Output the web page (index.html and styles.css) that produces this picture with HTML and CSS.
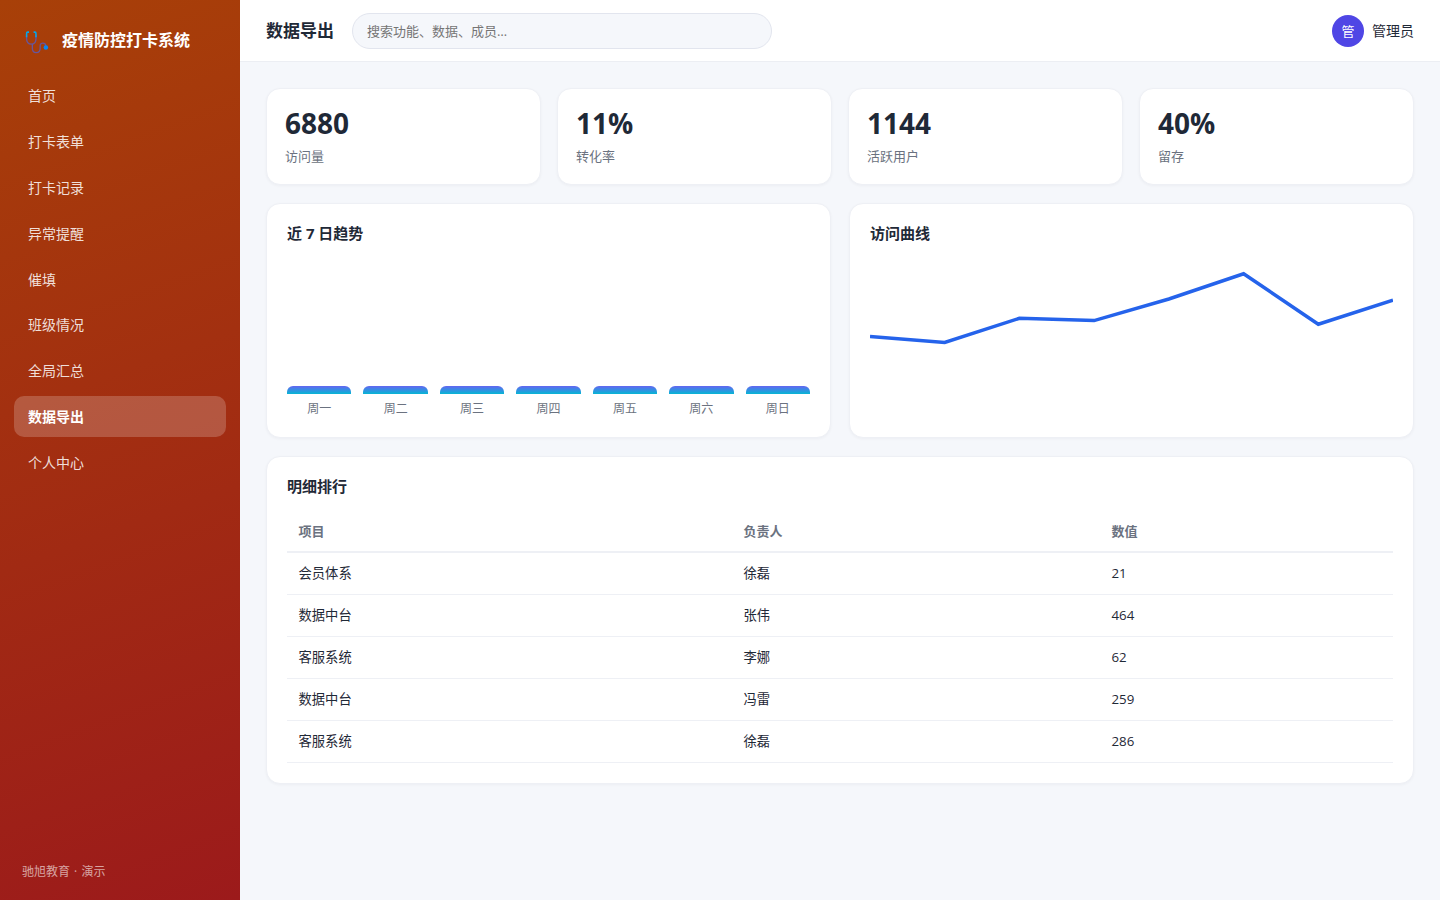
FILE: index.html
```
<!DOCTYPE html>
<html lang="zh-CN">
<head>
    <meta charset="utf-8">
    <title>数据导出 - 疫情防控打卡系统</title>
    <link rel="stylesheet" href="styles.css">
</head>
<body>
    <div class="app">
        <aside class="sidebar">
            <div class="brand">
                <svg class="brand-icon" viewBox="0 0 24 24" fill="none" stroke-width="1.3">
                    <path d="M2.500 6v3c0 3.500 2 5.500 4.500 5.500s4.500-2 4.500-5.500V6" stroke="#67569b"/>
                    <path d="M4.800 3H3.500Q2.500 3 2.500 4.500V8M9.200 3h1.300q1 0 1 1.500V8" stroke="#00a8ef" stroke-width="1.500"/>
                    <path d="M8 14.500v4c0 5.500 7.500 5.500 7.500 0V16c0-3.500 5.500-3 5.500.5" stroke="#67569b"/>
                    <circle cx="21" cy="17.800" r="2.200" fill="#0788f5"/>
                </svg>
                <span>疫情防控打卡系统</span>
            </div>
            <nav class="menu">
                <a class="menu-item">首页</a>
                <a class="menu-item">打卡表单</a>
                <a class="menu-item">打卡记录</a>
                <a class="menu-item">异常提醒</a>
                <a class="menu-item">催填</a>
                <a class="menu-item">班级情况</a>
                <a class="menu-item">全局汇总</a>
                <a class="menu-item active">数据导出</a>
                <a class="menu-item">个人中心</a>
            </nav>
            <div class="sidebar-foot">驰旭教育 · 演示</div>
        </aside>

        <div class="main">
            <header class="topbar">
                <h1>数据导出</h1>
                <input class="search" type="text" placeholder="搜索功能、数据、成员…">
                <div class="user">
                    <span class="avatar">管</span>
                    <span>管理员</span>
                </div>
            </header>

            <main class="content">
                <section class="stats">
                    <div class="card stat"><div class="num">6880</div><div class="label">访问量</div></div>
                    <div class="card stat"><div class="num">11%</div><div class="label">转化率</div></div>
                    <div class="card stat"><div class="num">1144</div><div class="label">活跃用户</div></div>
                    <div class="card stat"><div class="num">40%</div><div class="label">留存</div></div>
                </section>

                <section class="charts">
                    <div class="card panel">
                        <h2>近 7 日趋势</h2>
                        <div class="bars">
                            <div class="bar-col"><div class="bar"></div><span>周一</span></div>
                            <div class="bar-col"><div class="bar"></div><span>周二</span></div>
                            <div class="bar-col"><div class="bar"></div><span>周三</span></div>
                            <div class="bar-col"><div class="bar"></div><span>周四</span></div>
                            <div class="bar-col"><div class="bar"></div><span>周五</span></div>
                            <div class="bar-col"><div class="bar"></div><span>周六</span></div>
                            <div class="bar-col"><div class="bar"></div><span>周日</span></div>
                        </div>
                    </div>
                    <div class="card panel">
                        <h2>访问曲线</h2>
                        <svg class="line" viewBox="0 0 523 160">
                            <polyline points="0,78.400 74.700,84.400 149.400,60.300 224.100,62.600 298.900,41 373.600,15.800 448.300,66.200 523,42.200" fill="none" stroke="#2563eb" stroke-width="3.500"/>
                        </svg>
                    </div>
                </section>

                <section class="card panel detail">
                    <h2>明细排行</h2>
                    <table>
                        <colgroup><col class="col-item"><col class="col-owner"><col></colgroup>
                        <thead>
                            <tr><th>项目</th><th>负责人</th><th>数值</th></tr>
                        </thead>
                        <tbody>
                            <tr><td>会员体系</td><td>徐磊</td><td>21</td></tr>
                            <tr><td>数据中台</td><td>张伟</td><td>464</td></tr>
                            <tr><td>客服系统</td><td>李娜</td><td>62</td></tr>
                            <tr><td>数据中台</td><td>冯雷</td><td>259</td></tr>
                            <tr><td>客服系统</td><td>徐磊</td><td>286</td></tr>
                        </tbody>
                    </table>
                </section>
            </main>
        </div>
    </div>
</body>
</html>
```
FILE: styles.css
```
* {
    box-sizing: border-box;
}

body {
    margin: 0;
    background: #f5f7fb;
    color: #1f2937;
    font: 14px/1.5 "Open Sans", "Noto Sans CJK SC", sans-serif;
}

h1, h2 {
    margin: 0;
}

.app {
    display: flex;
    height: 100vh;
}

/* sidebar */
.sidebar {
    display: flex;
    flex-direction: column;
    width: 240px;
    padding: 20px 14px 18px;
    background: linear-gradient(160deg, #a84008, #9c1a1b);
    color: #fff;
}

.brand {
    display: flex;
    align-items: center;
    gap: 13px;
    height: 40px;
    margin-bottom: 15px;
    padding-left: 10px;
    font-size: 16px;
    font-weight: 700;
}

.brand-icon {
    width: 25px;
    height: 25px;
    margin-top: 3px;
}

.menu {
    display: flex;
    flex-direction: column;
    gap: 4.900px;
}

.menu-item {
    height: 41px;
    padding-left: 14px;
    border-radius: 10px;
    color: rgba(255, 255, 255, .85);
    line-height: 41px;
}

.menu-item.active {
    background: rgba(255, 255, 255, .2);
    color: #fff;
    font-weight: 700;
}

.sidebar-foot {
    margin-top: auto;
    padding-left: 8px;
    color: rgba(255, 255, 255, .6);
    font-size: 12px;
    line-height: 20px;
    word-spacing: 1px;
}

/* top bar */
.main {
    flex: 1;
    min-width: 0;
}

.topbar {
    display: flex;
    align-items: center;
    height: 62px;
    padding: 0 26px;
    background: #fff;
    border-bottom: 1px solid #eceef3;
}

.topbar h1 {
    margin-right: 18px;
    padding-top: 1px;
    font-size: 17px;
}

.search {
    width: 420px;
    height: 36px;
    padding: 0 14px;
    border: 1px solid #e2e5ee;
    border-radius: 18px;
    background: #f5f7fb;
    font: 13px "Open Sans", "Noto Sans CJK SC", sans-serif;
}

.search::placeholder {
    color: #757575;
}

.user {
    display: flex;
    align-items: center;
    gap: 8px;
    margin-left: auto;
}

.avatar {
    width: 32px;
    height: 32px;
    border-radius: 50%;
    background: #4f46e5;
    color: #fff;
    font-size: 13px;
    line-height: 32px;
    text-align: center;
}

/* content */
.content {
    display: flex;
    flex-direction: column;
    gap: 18px;
    padding: 26px;
}

.card {
    background: #fff;
    border: 1px solid #eef0f5;
    border-radius: 14px;
    box-shadow: 0 1px 3px rgba(16, 24, 40, .04);
}

.stats {
    display: grid;
    grid-template-columns: repeat(4, 1fr);
    gap: 16px;
}

.stat {
    height: 97px;
    padding: 16px 18px;
}

.num {
    font-size: 28px;
    font-weight: 700;
    line-height: 36px;
}

.label {
    margin-top: 5px;
    color: #6b7280;
    font-size: 13px;
    line-height: 20px;
}

.charts {
    display: grid;
    grid-template-columns: 1fr 1fr;
    gap: 18px;
}

.charts .panel {
    height: 235px;
}

.panel {
    padding: 18px 20px;
}

.panel h2 {
    font-size: 15px;
    line-height: 22px;
}

.bars {
    display: flex;
    align-items: flex-end;
    gap: 12px;
    height: 160px;
    margin-top: 14px;
}

.bar-col {
    flex: 1;
    color: #6b7280;
    font-size: 12px;
    line-height: 18px;
    text-align: center;
}

.bar {
    height: 8px;
    margin-bottom: 6px;
    border-radius: 6px 6px 0 0;
    background: linear-gradient(#6366f1, #06b6d4);
}

.line {
    display: block;
    width: 100%;
    height: 160px;
    margin-top: 14px;
}

.detail {
    height: 328px;
}

table {
    width: 100%;
    margin-top: 13px;
    border-collapse: collapse;
    table-layout: fixed;
    font-size: 13.300px;
}

.col-item {
    width: 445px;
}

.col-owner {
    width: 368px;
}

th, td {
    height: 42px;
    padding: 2px 11px 0 11.500px;
    border-bottom: 1px solid #eef0f5;
    text-align: left;
}

th {
    border-bottom-width: 2px;
    color: #6b7280;
    font-size: 13px;
    font-weight: 700;
}
```
